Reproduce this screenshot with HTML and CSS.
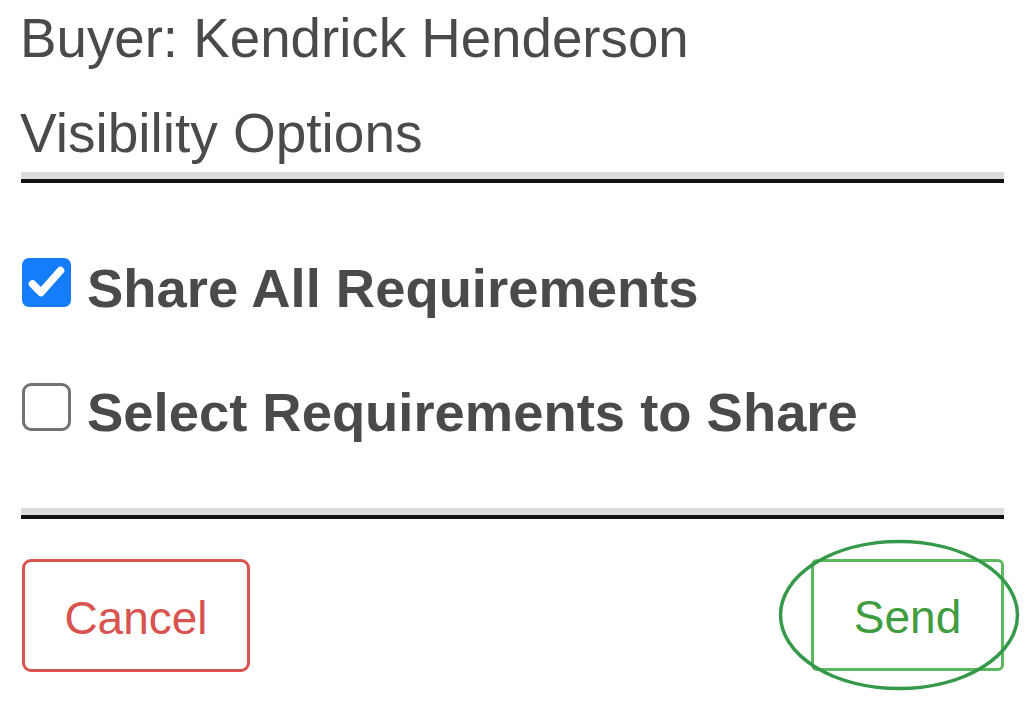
FILE: index.html
```html
<!DOCTYPE html>
<html lang="en">
<head>
<meta charset="utf-8">
<title>Visibility Options</title>
<link rel="stylesheet" href="styles.css">
</head>
<body>
<div class="panel">
  <div class="buyer">Buyer: Kendrick Henderson</div>
  <div class="section-title">Visibility Options</div>
  <div class="divider"></div>

  <label class="option option-first">
    <span class="box box-checked">
      <svg width="49" height="49" viewBox="0 0 49 49" aria-hidden="true"><path d="M10.5 26 L19 34.5 L38.5 12.5" fill="none" stroke="#ffffff" stroke-width="7.5" stroke-linecap="round" stroke-linejoin="round"/></svg>
    </span>
    <span class="option-label">Share All Requirements</span>
  </label>

  <label class="option option-second">
    <span class="box box-empty"></span>
    <span class="option-label">Select Requirements to Share</span>
  </label>

  <div class="divider divider-bottom"></div>

  <div class="actions">
    <button class="btn btn-cancel" type="button">Cancel</button>
    <div class="send-wrap">
      <button class="btn btn-send" type="button">Send</button>
      <svg class="highlight" width="242" height="152" viewBox="0 0 242 152" aria-hidden="true"><ellipse cx="121" cy="76" rx="118.5" ry="73.5" fill="none" stroke="#36994a" stroke-width="3.5"/></svg>
    </div>
  </div>
</div>
</body>
</html>
```

FILE: styles.css
```css
html, body {
  margin: 0;
  padding: 0;
  background: #ffffff;
  min-height: 100%;
}

body {
  font-family: "Liberation Sans", Arial, Helvetica, sans-serif;
  color: #4a4a4a;
  min-height: 704px;
}

.panel {
  width: 1004px;
  min-height: 704px;
  box-sizing: border-box;
  padding: 8px 0 0 21px;
  display: flex;
  flex-direction: column;
}

.buyer {
  font-size: 54.7px;
  line-height: 60px;
  margin-left: -1px;
}

.section-title {
  font-size: 55px;
  line-height: 60px;
  margin-top: 35px;
  margin-left: -1px;
}

.divider {
  margin-top: 9px;
  height: 7px;
  background: #dcdcdc;
  border-bottom: 4px solid #111111;
}

.divider-bottom {
  margin-top: 65px;
}

.option {
  display: flex;
  align-items: flex-start;
  gap: 15px;
  padding-left: 1px;
}

.option-first {
  margin-top: 75px;
}

.option-second {
  margin-top: 63px;
}

.box {
  flex: 0 0 auto;
  width: 49px;
  height: 49px;
  box-sizing: border-box;
  border-radius: 7px;
  display: flex;
}

.box-checked {
  background: #167dfa;
}

.box-empty {
  margin-top: 1px;
  width: 49px;
  height: 48px;
  border: 3px solid #727272;
  border-radius: 9px;
  background: #ffffff;
}

.option-label {
  font-size: 54.4px;
  font-weight: bold;
  line-height: 61px;
  margin-left: 1px;
}

.actions {
  margin-top: 40px;
  display: flex;
  justify-content: space-between;
  align-items: flex-start;
  padding-left: 1px;
}

.btn {
  font-family: "Liberation Sans", Arial, Helvetica, sans-serif;
  font-size: 46px;
  background: #ffffff;
  box-sizing: border-box;
  padding: 0;
  display: flex;
  align-items: center;
  justify-content: center;
}

.btn-cancel {
  width: 228px;
  height: 113px;
  border: 3px solid #d9534f;
  border-radius: 9px;
  color: #d9534f;
  padding-top: 4px;
}

.send-wrap {
  position: relative;
}

.btn-send {
  width: 193px;
  height: 112px;
  border: 3px solid #5cb85c;
  border-radius: 6px;
  color: #3f9c3f;
  padding-top: 4px;
}

.highlight {
  position: absolute;
  left: -33px;
  top: -20px;
  pointer-events: none;
}
```
